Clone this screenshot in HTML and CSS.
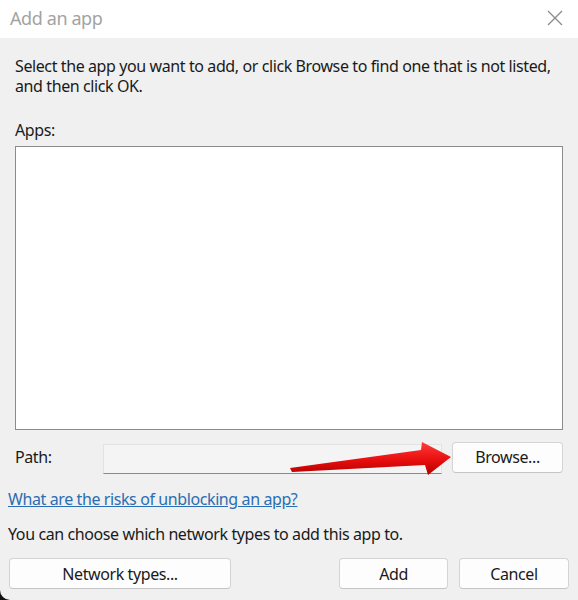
FILE: index.html
```html
<!DOCTYPE html>
<html lang="en">
<head>
    <meta charset="UTF-8">
    <meta name="viewport" content="width=device-width, initial-scale=1.0">
    <title>Add an app</title>
    <link rel="stylesheet" href="styles.css">
</head>
<body>
    <div class="dialog">
        <div class="titlebar">
            <span class="title">Add an app</span>
            <svg class="close" width="16" height="16" viewBox="0 0 16 16">
                <path d="M1 1L15 15M15 1L1 15" stroke="#8a8a8a" stroke-width="1.3" fill="none"/>
            </svg>
        </div>

        <div class="content">
            <p class="intro">Select the app you want to add, or click Browse to find one that is not listed, and then click OK.</p>

            <div class="label">Apps:</div>
            <div class="app-list"></div>

            <div class="path-row">
                <span class="path-label">Path:</span>
                <div class="path-field"></div>
                <button class="btn browse">Browse...</button>
            </div>

            <a class="risk-link" href="#">What are the risks of unblocking an app?</a>
            <p class="note">You can choose which network types to add this app to.</p>

            <div class="actions">
                <button class="btn network">Network types...</button>
                <div class="right-actions">
                    <button class="btn add">Add</button>
                    <button class="btn cancel">Cancel</button>
                </div>
            </div>
        </div>

        <svg class="arrow" width="578" height="600" viewBox="0 0 578 600">
            <defs>
                <linearGradient id="red" x1="0" y1="0" x2="0" y2="1">
                    <stop offset="0" stop-color="#ff3b3b"/>
                    <stop offset="0.55" stop-color="#e80e0e"/>
                    <stop offset="1" stop-color="#b00000"/>
                </linearGradient>
            </defs>
            <polygon points="290,468 421,450 422,442 451,457 428,475 425,465 292,472" fill="url(#red)"/>
        </svg>
    </div>
</body>
</html>
```

FILE: styles.css
```css
body {
    margin: 0;
    background: #111;
    font-family: 'Noto Sans', sans-serif;
    font-size: 16px;
    letter-spacing: -0.4px;
    color: #1a1a1a;
}
.dialog {
    position: relative;
    width: 578px;
    height: 600px;
    background: #f0f0f0;
    border-bottom-left-radius: 10px;
    overflow: hidden;
}
.titlebar {
    height: 38px;
    background: #fff;
    display: flex;
    align-items: center;
    justify-content: space-between;
    padding: 0 15px 2px 10px;
    box-sizing: border-box;
}
.title {
    font-size: 18px;
    color: #a3a3a3;
}
.content {
    padding: 18px 15px 0 15px;
}
.intro {
    margin: 0;
    line-height: 20px;
}
.label {
    margin-top: 24px;
    line-height: 20px;
}
.app-list {
    margin-top: 6px;
    height: 282px;
    background: #fff;
    border: 1px solid #8c8c8c;
}
.path-row {
    display: flex;
    align-items: center;
    margin-top: 11px;
    height: 32px;
}
.path-label {
    width: 88px;
}
.path-field {
    width: 339px;
    height: 30px;
    margin-top: 3px;
    background: #f4f4f4;
    border: 1px solid #e2e2e2;
    border-bottom-color: #8a8a8a;
    box-sizing: border-box;
}
.btn {
    font-family: 'Noto Sans', sans-serif;
    font-size: 16px;
    letter-spacing: -0.4px;
    color: #1a1a1a;
    background: #fdfdfd;
    border: 1px solid #d4d4d4;
    border-bottom-color: #c4c4c4;
    border-radius: 4px;
    height: 31px;
    padding: 0;
}
.browse {
    width: 111px;
    margin-left: 10px;
}
.risk-link {
    display: block;
    margin: 16px 0 0 -7px;
    line-height: 20px;
    color: #2a6db2;
    text-decoration: underline;
}
.note {
    margin: 15px 0 0 -7px;
    line-height: 20px;
}
.actions {
    display: flex;
    justify-content: space-between;
    margin: 14px -6px 0 -6px;
}
.network {
    width: 222px;
}
.right-actions {
    display: flex;
    gap: 11px;
}
.add {
    width: 109px;
}
.cancel {
    width: 110px;
}
.arrow {
    position: absolute;
    left: 0;
    top: 0;
    pointer-events: none;
}
```
